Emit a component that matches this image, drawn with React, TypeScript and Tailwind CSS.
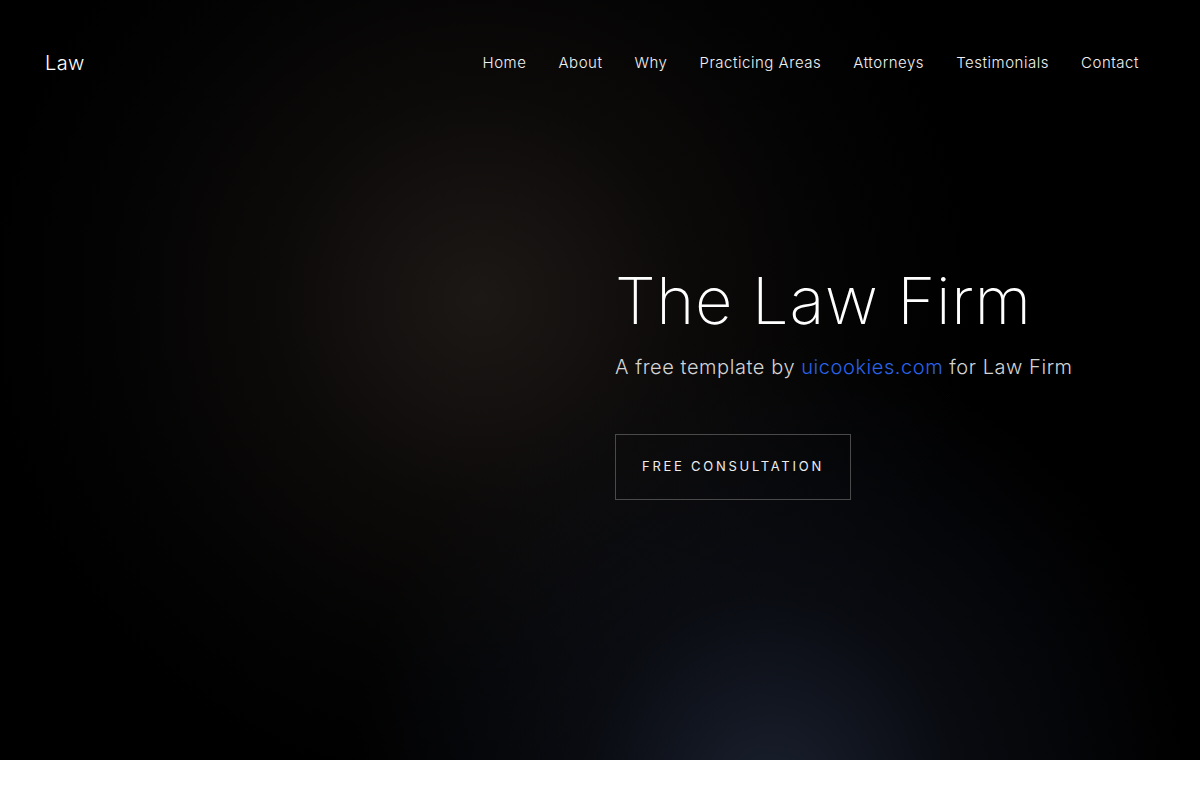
const navItems = [
  "Home",
  "About",
  "Why",
  "Practicing Areas",
  "Attorneys",
  "Testimonials",
  "Contact",
];

export default function App() {
  return (
    <div className="min-h-screen bg-white font-['Inter','Open_Sans',sans-serif]">
      {/* Hero */}
      <section className="relative h-[760px] overflow-hidden bg-black bg-[radial-gradient(circle_at_480px_300px,#1c1816_0px,#0c0a09_210px,#030303_380px,#000000_500px)]">
        <div className="pointer-events-none absolute inset-0 bg-[radial-gradient(ellipse_420px_460px_at_770px_800px,rgba(28,34,50,0.95)_0%,rgba(16,20,30,0.55)_45%,rgba(0,0,0,0)_100%)]" />

        <header className="relative mx-auto flex max-w-[1140px] items-center justify-between px-[15px] pt-[48px]">
          <a href="#" className="text-[20px] font-light tracking-[0.02em] text-white">
            Law
          </a>
          <nav className="flex items-center">
            {navItems.map((item) => (
              <a
                key={item}
                href="#"
                className="px-4 text-[15px] font-light tracking-[0.035em] text-[#f1f1f1]"
              >
                {item}
              </a>
            ))}
          </nav>
        </header>

        <div className="relative mx-auto grid max-w-[1140px] grid-cols-2 px-[15px]">
          <div />
          <div className="pl-[15px] pt-[184px]">
            <h1 className="text-[65px] font-extralight leading-[1.2] tracking-[0.01em] text-white">
              The Law Firm
            </h1>
            <p className="mt-[12px] text-[20px] font-light tracking-[0.028em] text-[#d4d4d4]">
              A free template by{" "}
              <a href="#" className="text-[#2a62e8]">
                uicookies.com
              </a>{" "}
              for Law Firm
            </p>
            <a
              href="#"
              className="mt-[52px] inline-flex h-[66px] w-[236px] items-center justify-center border border-[#4a4a4a] text-[13px] uppercase tracking-[0.21em] text-[#eeeeee]"
            >
              Free Consultation
            </a>
          </div>
        </div>
      </section>
    </div>
  );
}
